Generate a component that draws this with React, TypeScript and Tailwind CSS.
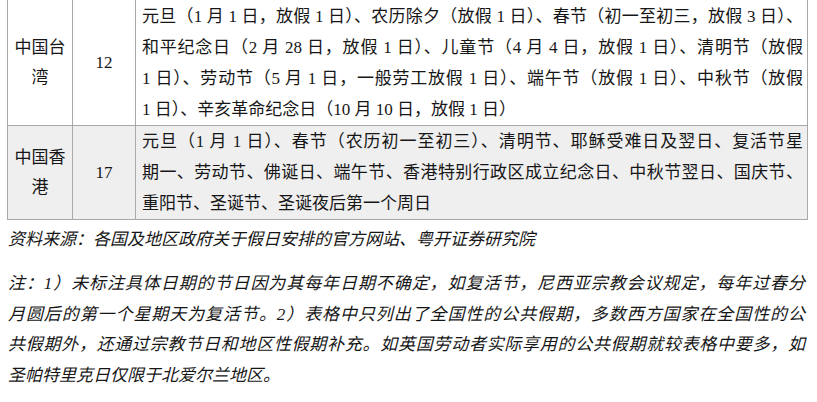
import React from 'react';

const font = "font-['Liberation_Serif','Noto_Sans_CJK_SC',serif]";

type Row = {
  region: string[];
  count: string;
  lines: string[];
  shaded?: boolean;
  first?: boolean;
};

const rows: Row[] = [
  {
    region: ['中国台', '湾'],
    count: '12',
    first: true,
    lines: [
      '元旦（1 月 1 日，放假 1 日）、农历除夕（放假 1 日）、春节（初一至初三，放假 3 日）、',
      '和平纪念日（2 月 28 日，放假 1 日）、儿童节（4 月 4 日，放假 1 日）、清明节（放假',
      '1 日）、劳动节（5 月 1 日，一般劳工放假 1 日）、端午节（放假 1 日）、中秋节（放假',
      '1 日）、辛亥革命纪念日（10 月 10 日，放假 1 日）',
    ],
  },
  {
    region: ['中国香', '港'],
    count: '17',
    shaded: true,
    lines: [
      '元旦（1 月 1 日）、春节（农历初一至初三）、清明节、耶稣受难日及翌日、复活节星',
      '期一、劳动节、佛诞日、端午节、香港特别行政区成立纪念日、中秋节翌日、国庆节、',
      '重阳节、圣诞节、圣诞夜后第一个周日',
    ],
  },
];

const notes = [
  '注：1）未标注具体日期的节日因为其每年日期不确定，如复活节，尼西亚宗教会议规定，每年过春分',
  '月圆后的第一个星期天为复活节。2）表格中只列出了全国性的公共假期，多数西方国家在全国性的公',
  '共假期外，还通过宗教节日和地区性假期补充。如英国劳动者实际享用的公共假期就较表格中要多，如',
  '圣帕特里克日仅限于北爱尔兰地区。',
];

function Justified({ lines }: { lines: string[] }) {
  return (
    <>
      {lines.map((l, i) => (
        <div
          key={i}
          className={`whitespace-nowrap ${i < lines.length - 1 ? 'text-justify [text-align-last:justify]' : ''}`}
        >
          {l}
        </div>
      ))}
    </>
  );
}

export default function App() {
  return (
    <div className={`w-[817px] h-[402px] overflow-hidden bg-white text-[#161616] text-[17px] ${font}`}>
      <div className="ml-[7px] w-[801px] border-x border-[#a8a8a8]">
        {rows.map((r) => (
          <div
            key={r.count}
            className={`grid grid-cols-[65px_63px_1fr] ${r.first ? '' : 'border-t border-[#a8a8a8]'} ${r.shaded ? 'bg-[#efefef] border-b' : ''}`}
          >
            <div className="flex flex-col items-center justify-center border-r border-[#a8a8a8] leading-[30px]">
              {r.region.map((t) => (
                <div key={t}>{t}</div>
              ))}
            </div>
            <div className="flex items-center justify-center border-r border-[#a8a8a8]">
              {r.count}
            </div>
            <div className={`pl-[6px] pr-[4px] leading-[31px] ${r.first ? 'pt-[1px]' : ''}`}>
              <Justified lines={r.lines} />
            </div>
          </div>
        ))}
      </div>
      <div className="mt-[4px] pl-[8px] italic leading-[31px]">
        资料来源：各国及地区政府关于假日安排的官方网站、粤开证券研究院
      </div>
      <div className="mt-[14px] pl-[8px] w-[805px] italic leading-[30.5px]">
        <Justified lines={notes} />
      </div>
    </div>
  );
}
